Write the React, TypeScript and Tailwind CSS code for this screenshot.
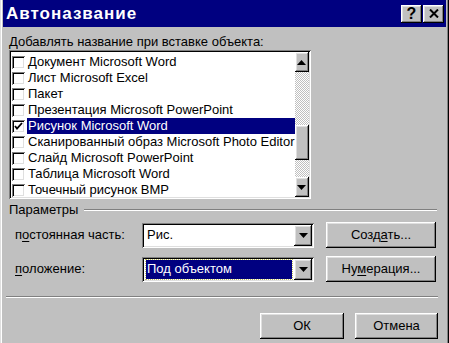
import React from "react";

const raised =
  "shadow-[inset_-1px_-1px_#000,inset_1px_1px_#fff,inset_-2px_-2px_#808080,inset_2px_2px_#dfdfdf]";
const sunken =
  "shadow-[inset_1px_1px_#808080,inset_-1px_-1px_#fff,inset_2px_2px_#000,inset_-2px_-2px_#dfdfdf]";

function Arrow({ up = false }: { up?: boolean }) {
  return (
    <svg width="9" height="5" viewBox="0 0 9 5">
      {up ? (
        <polygon points="4.5,0 9,5 0,5" fill="#000" />
      ) : (
        <polygon points="0,0 9,0 4.5,5" fill="#000" />
      )}
    </svg>
  );
}

function Checkbox({ checked }: { checked?: boolean }) {
  return (
    <div
      className={`w-[13px] h-[13px] bg-white shrink-0 flex items-center justify-center ${sunken}`}
    >
      {checked && (
        <svg width="9" height="9" viewBox="0 0 9 9">
          <path d="M1 4 L3 6.5 L8 1" stroke="#000" strokeWidth="1.8" fill="none" />
        </svg>
      )}
    </div>
  );
}

const items = [
  "Документ Microsoft Word",
  "Лист Microsoft Excel",
  "Пакет",
  "Презентация Microsoft PowerPoint",
  "Рисунок Microsoft Word",
  "Сканированный образ Microsoft Photo Editor",
  "Слайд Microsoft PowerPoint",
  "Таблица Microsoft Word",
  "Точечный рисунок BMP",
];

function Button({ children, w }: { children: React.ReactNode; w: string }) {
  return (
    <div
      className={`${w} h-[26px] bg-[#c0c0c0] flex items-center justify-center text-[13px] text-black ${raised}`}
    >
      {children}
    </div>
  );
}

function Combo({ text, selected }: { text: string; selected?: boolean }) {
  return (
    <div className={`w-[172px] h-[25px] bg-white flex items-stretch p-[2px] ${sunken}`}>
      <div className="flex-1 flex items-center px-[2px]">
        {selected ? (
          <div className="w-full h-[19px] bg-[#000080] text-white flex items-center pl-[1px] outline outline-1 outline-dotted outline-[#c0c060]">
            {text}
          </div>
        ) : (
          <span className="pl-[1px]">{text}</span>
        )}
      </div>
      <div className={`w-[18px] bg-[#c0c0c0] flex items-center justify-center ${raised}`}>
        <Arrow />
      </div>
    </div>
  );
}

export default function App() {
  return (
    <div
      className="w-[449px] h-[343px] bg-[#c0c0c0] flex flex-col px-[3px] overflow-hidden text-[13px] text-black font-['Liberation_Sans',Arial,sans-serif] shadow-[inset_1px_0_#dfdfdf,inset_2px_0_#fff,inset_-1px_0_#000,inset_-2px_0_#808080]"
    >
      {/* Title bar */}
      <div className="h-[27px] bg-[#000080] flex items-center justify-between pl-[3px] pr-[2px] shrink-0">
        <span className="text-white font-bold text-[17px] tracking-[1px]">Автоназвание</span>
        <div className="flex gap-[1px]">
          <div className={`w-[21px] h-[18px] bg-[#c0c0c0] flex items-center justify-center font-bold text-[16px] leading-none ${raised}`}>
            ?
          </div>
          <div className={`w-[21px] h-[18px] bg-[#c0c0c0] flex items-center justify-center ${raised}`}>
            <svg width="10" height="9" viewBox="0 0 10 9">
              <path d="M1 0.5 L9 8.5 M9 0.5 L1 8.5" stroke="#000" strokeWidth="2" />
            </svg>
          </div>
        </div>
      </div>

      <div className="flex flex-col px-[6px]">
        <div className="mt-[7px] h-[16px] leading-[16px]">
          <span className="underline underline-offset-2">Д</span>обавлять название при вставке объекта:
        </div>

        {/* List box */}
        <div className={`w-[302px] h-[149px] bg-white p-[2px] flex ${sunken}`}>
          <div className="flex-1 flex flex-col pt-[2px]">
            {items.map((t, i) => (
              <div key={t} className="h-[16px] flex items-center">
                <div className="pl-[1px] pr-[2px]">
                  <Checkbox checked={i === 4} />
                </div>
                <div
                  className={`flex-1 h-[16px] leading-[16px] pl-[1px] whitespace-nowrap ${
                    i === 4 ? "bg-[#000080] text-white" : ""
                  }`}
                >
                  {t}
                </div>
              </div>
            ))}
          </div>
          {/* Scrollbar */}
          <div className="w-[20px] flex flex-col bg-[repeating-conic-gradient(#c0c0c0_0%_25%,#fff_0%_50%)] bg-[length:2px_2px]">
            <div className={`h-[20px] bg-[#c0c0c0] flex items-center justify-center ${raised}`}>
              <Arrow up />
            </div>
            <div className="flex-1 flex flex-col">
              <div className="h-[53px]" />
              <div className={`h-[35px] bg-[#c0c0c0] ${raised}`} />
            </div>
            <div className={`h-[20px] bg-[#c0c0c0] flex items-center justify-center ${raised}`}>
              <Arrow />
            </div>
          </div>
        </div>

        {/* Group header */}
        <div className="mt-[3px] h-[16px] flex items-center gap-[6px] pr-[3px]">
          <span className="leading-[16px]">Параметры</span>
          <div className="flex-1 h-[2px] border-t border-[#808080] border-b border-b-white" />
        </div>

        {/* Row 1 */}
        <div className="mt-[4px] flex items-center">
          <div className="w-[133px] pl-[6px]">
            п<span className="underline underline-offset-2">о</span>стоянная часть:
          </div>
          <Combo text="Рис." />
          <div className="ml-[12px]">
            <Button w="w-[110px]">
              <span>
                Созд<span className="underline underline-offset-2">а</span>ть...
              </span>
            </Button>
          </div>
        </div>

        {/* Row 2 */}
        <div className="mt-[8px] flex items-center">
          <div className="w-[133px] pl-[6px]">
            <span className="underline underline-offset-2">п</span>оложение:
          </div>
          <Combo text="Под объектом" selected />
          <div className="ml-[12px]">
            <Button w="w-[110px]">
              <span>
                Ну<span className="underline underline-offset-2">м</span>ерация...
              </span>
            </Button>
          </div>
        </div>

        {/* Separator */}
        <div className="mt-[14px] -ml-[3px] mr-[2px] h-[2px] border-t border-[#808080] border-b border-b-white" />

        {/* Bottom buttons */}
        <div className="mt-[15px] flex justify-end gap-[11px] pr-[2px]">
          <Button w="w-[84px]">ОК</Button>
          <Button w="w-[83px]">Отмена</Button>
        </div>
      </div>
    </div>
  );
}
